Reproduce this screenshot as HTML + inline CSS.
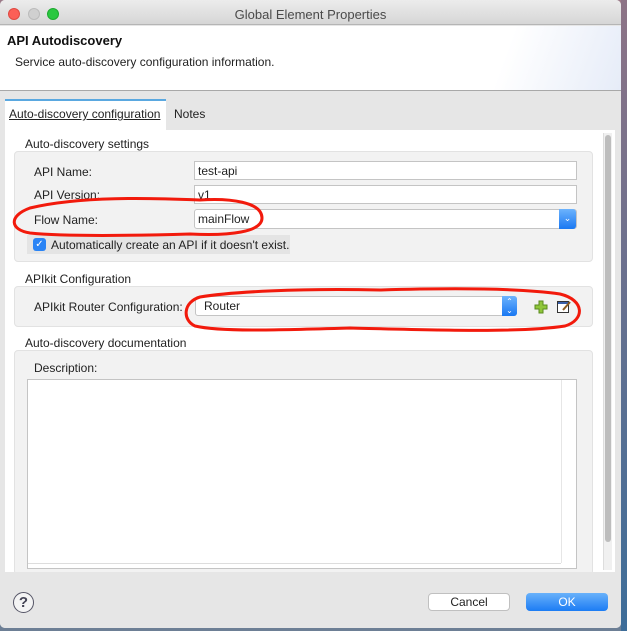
<!DOCTYPE html>
<html><head><style>
*{margin:0;padding:0;box-sizing:border-box}
body{width:627px;height:631px;overflow:hidden;background:#6d7f95;font-family:"Liberation Sans",sans-serif;font-size:12px;color:#222;position:relative}
.a{position:absolute}
.win{left:0;top:0;width:621px;height:628px;background:#e6e6e6;border-radius:5px;overflow:hidden}
.inp{background:#fff;border:1px solid #c4c4c4;height:19px;padding-left:3px;line-height:18px;font-size:12px}
.grp{background:#f2f2f2;border:1px solid #e2e2e2;border-radius:4px}
.lbl{font-size:12px}
</style></head><body>
<div class="a" style="left:0;top:0;width:627px;height:10px;background:#9c7a88"></div>
<div class="a" style="left:621px;top:0;width:6px;height:631px;background:linear-gradient(#8d7386,#3d6d99)"></div>
<div class="a win">
 <div class="a" style="left:0;top:0;width:621px;height:25px;background:linear-gradient(#ececec,#d6d6d6);border-bottom:1px solid #b5b5b5"></div>
 <div class="a" style="left:8px;top:8px;width:12px;height:12px;border-radius:50%;background:#fc5f57;border:1px solid #df4a42"></div>
 <div class="a" style="left:28px;top:8px;width:12px;height:12px;border-radius:50%;background:#d0d0d0;border:1px solid #bbb"></div>
 <div class="a" style="left:47px;top:8px;width:12px;height:12px;border-radius:50%;background:#2ac840;border:1px solid #1eaa30"></div>
 <div class="a" style="left:0;top:7px;width:621px;text-align:center;font-size:13px;color:#4a4a4a">Global Element Properties</div>
 <div class="a" style="left:0;top:26px;width:621px;height:65px;background:linear-gradient(110deg,#fff 80%,#e6ecf8);border-bottom:1px solid #a8a8a8"></div>
 <div class="a" style="left:7px;top:33px;font-size:13px;font-weight:bold;color:#111">API Autodiscovery</div>
 <div class="a" style="left:15px;top:55px;font-size:12px">Service auto-discovery configuration information.</div>
 <div class="a" style="left:5px;top:99px;width:161px;height:32px;background:#fff;border-top:2px solid #5aa8e0"></div>
 <div class="a" style="left:9px;top:107px;font-size:12px;text-decoration:underline">Auto-discovery configuration</div>
 <div class="a" style="left:174px;top:107px;font-size:12px">Notes</div>
 <div class="a" style="left:5px;top:130px;width:610px;height:442px;background:#fff"></div>
 <div class="a" style="left:603px;top:133px;width:9px;height:437px;background:#f0f0f0;border-left:1px solid #ddd"></div>
 <div class="a" style="left:605px;top:135px;width:6px;height:407px;background:#bdbdbd;border-radius:3px"></div>
 <div class="a lbl" style="left:25px;top:137px">Auto-discovery settings</div>
 <div class="a grp" style="left:14px;top:151px;width:579px;height:111px"></div>
 <div class="a lbl" style="left:34px;top:165px">API Name:</div>
 <div class="a inp" style="left:194px;top:161px;width:383px">test-api</div>
 <div class="a lbl" style="left:34px;top:188px">API Version:</div>
 <div class="a inp" style="left:194px;top:185px;width:383px">v1</div>
 <div class="a lbl" style="left:34px;top:213px">Flow Name:</div>
 <div class="a inp" style="left:194px;top:209px;width:383px;height:20px;border-radius:3px;line-height:19px">mainFlow</div>
 <div class="a" style="left:559px;top:209px;width:17px;height:20px;background:linear-gradient(#6db3fd,#1a78f2);border-radius:0 3px 3px 0;color:#fff;font-size:9px;text-align:center;line-height:19px">&#8964;</div>
 <div class="a" style="left:27px;top:235px;width:263px;height:19px;background:#e4e4e4"></div>
 <div class="a" style="left:33px;top:238px;width:13px;height:13px;background:#2a84f5;border-radius:3px;color:#fff;font-size:10px;line-height:13px;text-align:center">&#10003;</div>
 <div class="a lbl" style="left:51px;top:238px">Automatically create an API if it doesn't exist.</div>
 <div class="a lbl" style="left:25px;top:272px">APIkit Configuration</div>
 <div class="a grp" style="left:14px;top:286px;width:579px;height:41px"></div>
 <div class="a lbl" style="left:34px;top:300px">APIkit Router Configuration:</div>
 <div class="a inp" style="left:195px;top:296px;width:322px;height:20px;border-radius:3px;padding-left:8px;line-height:19px">Router</div>
 <div class="a" style="left:502px;top:296px;width:15px;height:20px;background:linear-gradient(#6db3fd,#1a78f2);border-radius:0 3px 3px 0;color:#fff;font-size:8px;text-align:center;line-height:9px;padding-top:1px">&#8963;<br>&#8964;</div>
 <svg class="a" style="left:534px;top:300px" width="14" height="14"><path d="M5 1h4v4h4v4h-4v4h-4v-4h-4v-4h4z" fill="#8fc63a" stroke="#5a8a1e"/></svg>
 <svg class="a" style="left:556px;top:299px" width="16" height="16"><rect x="1.5" y="2.5" width="11" height="11" fill="#fff" stroke="#333"/><rect x="2" y="3" width="10" height="2" fill="#3a5fa8"/><path d="M7 11l7-8" stroke="#8a5a20" stroke-width="2"/></svg>
 <div class="a lbl" style="left:25px;top:336px">Auto-discovery documentation</div>
 <div class="a grp" style="left:14px;top:350px;width:579px;height:225px"></div>
 <div class="a lbl" style="left:34px;top:361px">Description:</div>
 <div class="a" style="left:27px;top:379px;width:550px;height:190px;background:#fff;border:1px solid #c4c4c4"></div>
 <div class="a" style="left:561px;top:380px;width:1px;height:183px;background:#e6e6e6"></div>
 <div class="a" style="left:28px;top:563px;width:533px;height:1px;background:#ddd"></div>
 <div class="a" style="left:0;top:572px;width:621px;height:56px;background:#e6e6e6"></div>
 <div class="a" style="left:13px;top:592px;width:21px;height:21px;border-radius:50%;border:1.5px solid #556;background:#f4f4f4;color:#445;font-size:15px;font-weight:bold;text-align:center;line-height:19px">?</div>
 <div class="a" style="left:428px;top:593px;width:82px;height:18px;background:#fff;border:1px solid #c0c0c0;border-radius:4px;text-align:center;line-height:17px;font-size:12px">Cancel</div>
 <div class="a" style="left:526px;top:593px;width:82px;height:18px;background:linear-gradient(#69b1fa,#1c7cf4);border-radius:4px;text-align:center;line-height:18px;font-size:12px;color:#fff">OK</div>
</div>
<svg class="a" style="left:0;top:0" width="627" height="631">
 <path d="M30 208C80 196 150 198 200 200 C230 198 262 202 262 218 C262 232 230 236 190 234 C120 236 60 236 30 233 C10 230 8 216 30 208Z" fill="none" stroke="#f21a0c" stroke-width="3"/>
 <path d="M200 297C230 292 300 288 380 290 C450 288 520 288 560 294 C585 300 585 320 565 326 C520 333 430 330 350 328 C280 330 220 332 195 326 C182 320 183 302 200 297Z" fill="none" stroke="#f21a0c" stroke-width="3"/>
</svg>
</body></html>
